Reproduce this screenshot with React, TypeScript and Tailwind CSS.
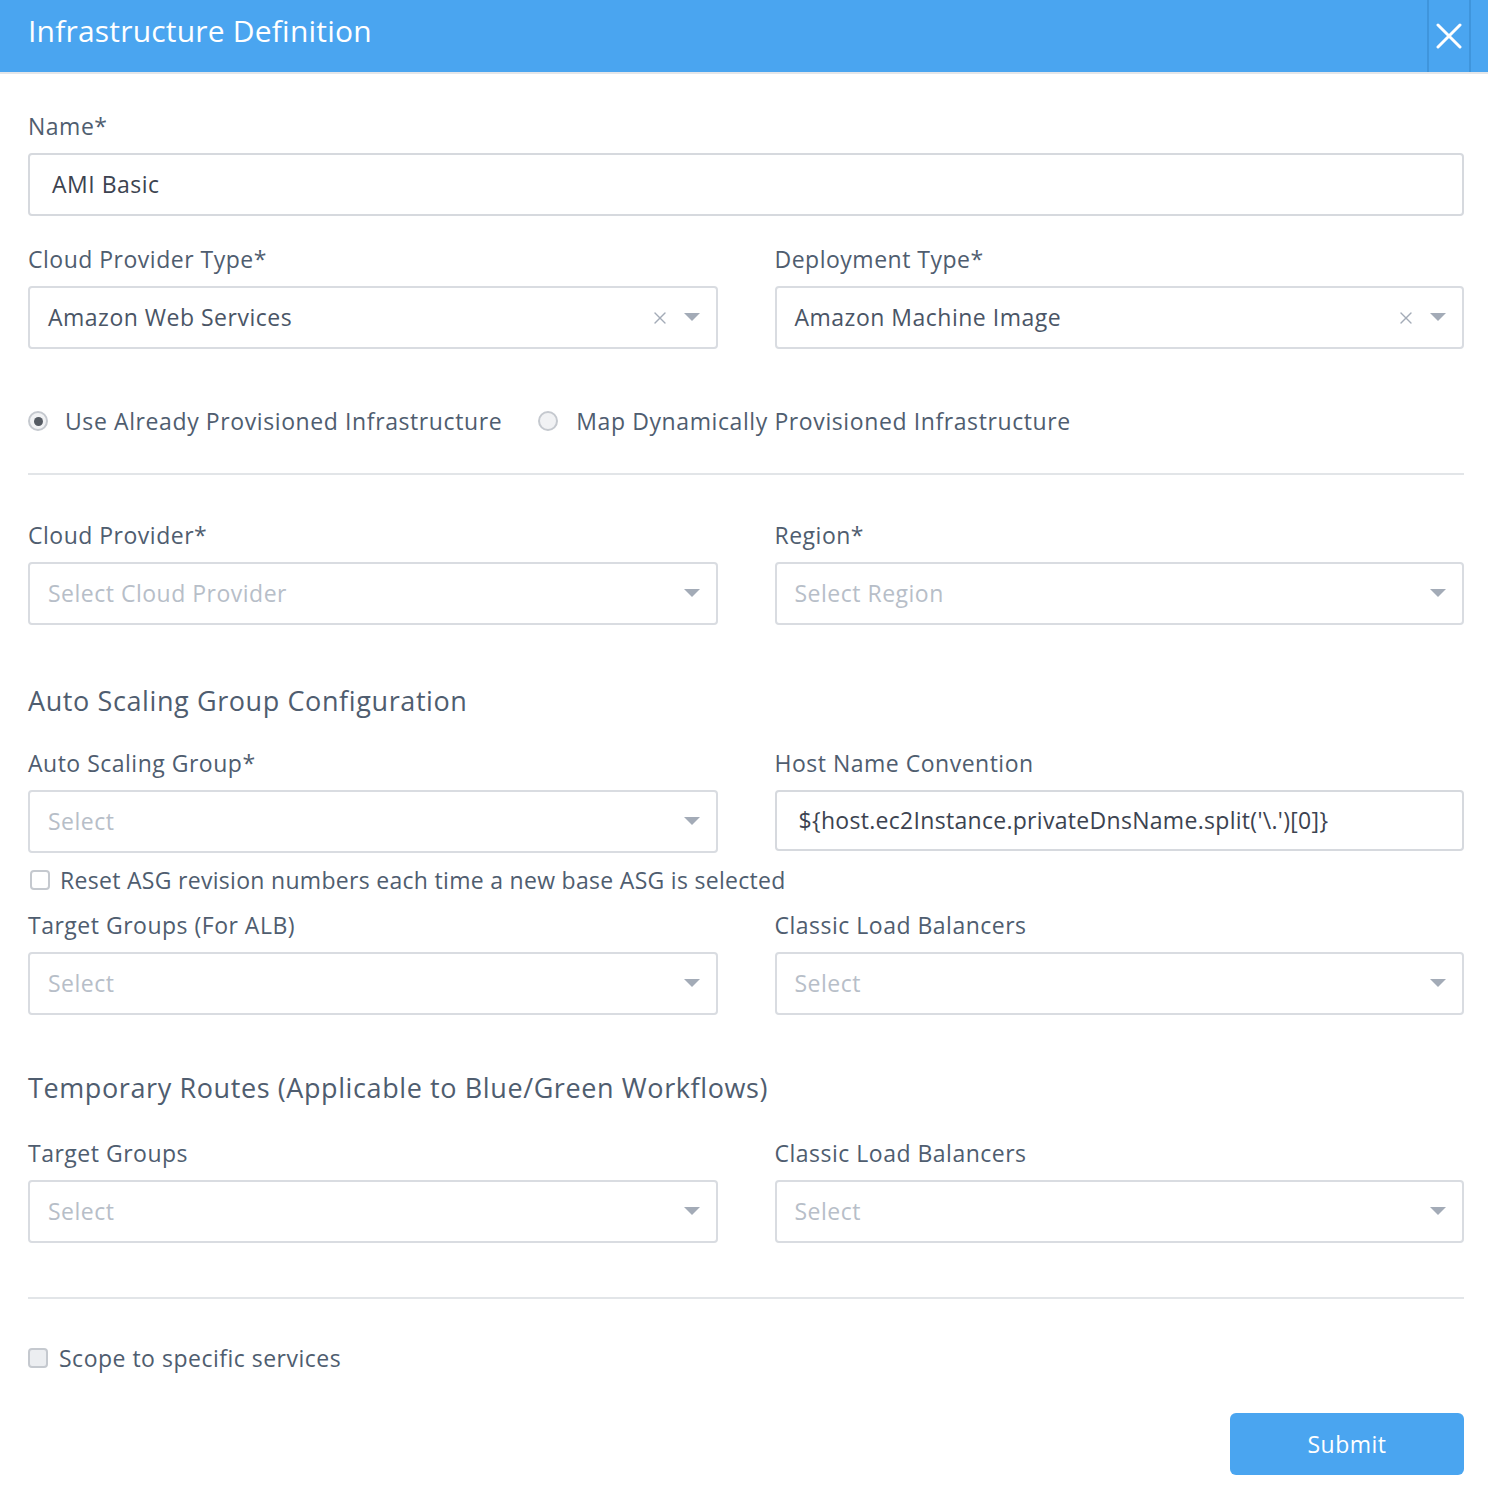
import { X } from 'lucide-react'

const font = { fontFamily: '"Open Sans", Lato, sans-serif' }

function Caret() {
  return (
    <svg width="16" height="9" viewBox="0 0 16 9" className="shrink-0">
      <path d="M0 0 L16 0 L8 8 Z" fill="#a3abb7" />
    </svg>
  )
}

function Field({ label, children }: { label: string; children: React.ReactNode }) {
  return (
    <div className="flex flex-col">
      <label className="text-[23px] tracking-[0.5px] leading-[28px] text-[#4f5d6f] mb-[13px]">{label}</label>
      {children}
    </div>
  )
}

function SelectBox({ value, placeholder, clearable }: { value?: string; placeholder?: string; clearable?: boolean }) {
  return (
    <div className="h-[63px] border-2 border-[#d9dce1] rounded-[4px] flex items-center pl-[18px] pr-[16px] bg-white">
      <span className={`flex-1 text-[23px] tracking-[0.5px] ${value ? 'text-[#4a5566]' : 'text-[#b7bec8]'}`}>
        {value ?? placeholder}
      </span>
      {clearable && <X size={20} strokeWidth={1.6} color="#a3abb7" className="mr-[14px]" />}
      <Caret />
    </div>
  )
}

export default function App() {
  return (
    <div className="w-[1488px] h-[1504px] bg-white" style={font}>
      <header className="h-[72px] bg-[#4aa5f0] flex items-stretch border-b-2 border-[#e4e6e9] box-content">
        <h1 className="flex-1 pl-[28px] text-white text-[30px] tracking-[0.2px] leading-[62px] font-normal">Infrastructure Definition</h1>
        <div className="w-[44px] border-l-2 border-r-2 border-[#3f95dc] flex items-center justify-center mr-[17px]">
          <svg width="26" height="26" viewBox="0 0 26 26">
            <path d="M2 2 L24 24 M24 2 L2 24" stroke="#fff" strokeWidth="3" strokeLinecap="round" />
          </svg>
        </div>
      </header>

      <div className="px-[28px] pr-[24px] pt-[38px]">
        <Field label="Name*">
          <div className="h-[63px] border-2 border-[#d6d9de] rounded-[4px] flex items-center pl-[22px] text-[23px] tracking-[0.5px] text-[#3c4350]">
            AMI Basic
          </div>
        </Field>

        <div className="grid grid-cols-2 gap-x-[57px] mt-[29px]">
          <Field label="Cloud Provider Type*">
            <SelectBox value="Amazon Web Services" clearable />
          </Field>
          <Field label="Deployment Type*">
            <SelectBox value="Amazon Machine Image" clearable />
          </Field>
        </div>

        <div className="flex items-center mt-[58px] text-[23px] tracking-[0.6px] text-[#4f5d6f] leading-[28px]">
          <span className="w-[20px] h-[20px] rounded-full border-2 border-[#c5c9cf] bg-[#f1f2f4] flex items-center justify-center">
            <span className="w-[9px] h-[9px] rounded-full bg-[#555b63]" />
          </span>
          <span className="ml-[17px]">Use Already Provisioned Infrastructure</span>
          <span className="w-[20px] h-[20px] rounded-full border-2 border-[#c5c9cf] bg-[#f1f2f4] ml-[36px]" />
          <span className="ml-[18px]">Map Dynamically Provisioned Infrastructure</span>
        </div>

        <div className="h-[2px] bg-[#e2e5e8] mt-[38px]" />

        <div className="grid grid-cols-2 gap-x-[57px] mt-[46px]">
          <Field label="Cloud Provider*">
            <SelectBox placeholder="Select Cloud Provider" />
          </Field>
          <Field label="Region*">
            <SelectBox placeholder="Select Region" />
          </Field>
        </div>

        <h2 className="text-[27px] tracking-[0.6px] text-[#4f5d6f] mt-[59px] leading-[34px]">Auto Scaling Group Configuration</h2>

        <div className="grid grid-cols-2 gap-x-[57px] mt-[31px]">
          <Field label="Auto Scaling Group*">
            <SelectBox placeholder="Select" />
          </Field>
          <Field label="Host Name Convention">
            <div className="h-[61px] border-2 border-[#d6d9de] rounded-[4px] flex items-center pl-[22px] text-[23px] tracking-[0.3px] text-[#3c4350]">
              {"${host.ec2Instance.privateDnsName.split('\\.')[0]}"}
            </div>
          </Field>
        </div>

        <div className="flex items-center mt-[13px] text-[23px] tracking-[0.3px] text-[#4f5d6f] leading-[28px]">
          <span className="w-[20px] h-[20px] rounded-[4px] border-2 border-[#c5c9cf] ml-[2px]" />
          <span className="ml-[10px]">Reset ASG revision numbers each time a new base ASG is selected</span>
        </div>

        <div className="grid grid-cols-2 gap-x-[57px] mt-[17px]">
          <Field label="Target Groups (For ALB)">
            <SelectBox placeholder="Select" />
          </Field>
          <Field label="Classic Load Balancers">
            <SelectBox placeholder="Select" />
          </Field>
        </div>

        <h2 className="text-[27px] tracking-[0.6px] text-[#4f5d6f] mt-[56px] leading-[34px]">Temporary Routes (Applicable to Blue/Green Workflows)</h2>

        <div className="grid grid-cols-2 gap-x-[57px] mt-[34px]">
          <Field label="Target Groups">
            <SelectBox placeholder="Select" />
          </Field>
          <Field label="Classic Load Balancers">
            <SelectBox placeholder="Select" />
          </Field>
        </div>

        <div className="h-[2px] bg-[#e2e5e8] mt-[54px]" />

        <div className="flex items-center mt-[45px] text-[23px] tracking-[0.5px] text-[#4f5d6f] leading-[28px]">
          <span className="w-[20px] h-[20px] rounded-[4px] border-2 border-[#c5c9cf] bg-[#eceef1]" />
          <span className="ml-[11px]">Scope to specific services</span>
        </div>

        <div className="flex justify-end mt-[41px]">
          <button className="w-[234px] h-[62px] rounded-[6px] bg-[#4aa5f0] text-white text-[23px] tracking-[0.5px]">Submit</button>
        </div>
      </div>
    </div>
  )
}
